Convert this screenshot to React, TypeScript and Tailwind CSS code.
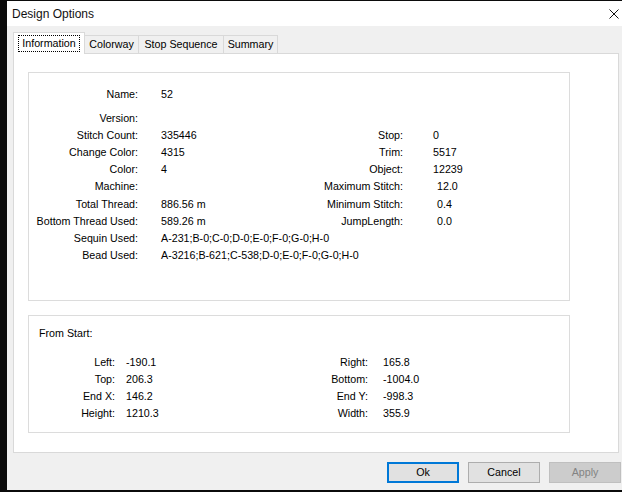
import React from 'react';

const font = { fontFamily: '"Liberation Sans", Arial, sans-serif' };

type Row = { l: string; v: string; rl?: string; rv?: string; shift?: boolean };

const infoRows: Row[] = [
  { l: 'Version:', v: '' },
  { l: 'Stitch Count:', v: '335446', rl: 'Stop:', rv: '0' },
  { l: 'Change Color:', v: '4315', rl: 'Trim:', rv: '5517' },
  { l: 'Color:', v: '4', rl: 'Object:', rv: '12239' },
  { l: 'Machine:', v: '', rl: 'Maximum Stitch:', rv: '12.0', shift: true },
  { l: 'Total Thread:', v: '886.56 m', rl: 'Minimum Stitch:', rv: '0.4', shift: true },
  { l: 'Bottom Thread Used:', v: '589.26 m', rl: 'JumpLength:', rv: '0.0', shift: true },
  { l: 'Sequin Used:', v: 'A-231;B-0;C-0;D-0;E-0;F-0;G-0;H-0' },
  { l: 'Bead Used:', v: 'A-3216;B-621;C-538;D-0;E-0;F-0;G-0;H-0' },
];

const startRows = [
  ['Left:', '-190.1', 'Right:', '165.8'],
  ['Top:', '206.3', 'Bottom:', '-1004.0'],
  ['End X:', '146.2', 'End Y:', '-998.3'],
  ['Height:', '1210.3', 'Width:', '355.9'],
];

function Tab({ label, w }: { label: string; w: string }) {
  return (
    <div
      className={`${w} h-[18px] -ml-px border border-b-0 border-[#d9d9d9] bg-[#f0f0f0] flex items-center justify-center`}
    >
      {label}
    </div>
  );
}

export default function App() {
  return (
    <div
      className="w-[622px] h-[492px] bg-[#0b0b0b] overflow-hidden pl-[7px] pt-[1px] text-[10.7px] text-black"
      style={font}
    >
      <div className="w-[615px] h-[489px] bg-[#f0f0f0] flex flex-col">
        {/* Title bar */}
        <div className="h-[25px] bg-white flex items-center justify-between pl-[5px] pr-[3px]">
          <span className="text-[12px] text-[#111]">Design Options</span>
          <svg width="10" height="10" viewBox="0 0 10 10">
            <path d="M0.5 0.5 L9.5 9.5 M9.5 0.5 L0.5 9.5" stroke="#111" strokeWidth="1" />
          </svg>
        </div>

        {/* Tabs */}
        <div className="pt-[6px] pl-[6px] flex items-end relative z-10">
          <div className="w-[72px] h-[22px] -mb-px bg-white border border-b-0 border-[#d9d9d9] flex items-center justify-center">
            <span className="border border-dotted border-black px-[3px] leading-[15px]">Information</span>
          </div>
          <Tab label="Colorway" w="w-[55px]" />
          <Tab label="Stop Sequence" w="w-[86px]" />
          <Tab label="Summary" w="w-[55px]" />
        </div>

        {/* Tab page */}
        <div className="ml-[6px] w-[606px] h-[400px] bg-white border border-[#d9d9d9] pt-[18px] pl-[14px]">
          {/* Info group */}
          <div className="w-[542px] h-[229px] border border-[#dcdcdc] pt-[13px]">
            <div className="flex h-[17px] items-center">
              <span className="w-[109px] text-right">Name:</span>
              <span className="ml-[23px]">52</span>
            </div>
            <div className="mt-[6px]">
              {infoRows.map((r) => (
                <div key={r.l} className="flex h-[17.2px] items-center whitespace-nowrap">
                  <span className="w-[109px] shrink-0 text-right">{r.l}</span>
                  <span className="ml-[23px] w-[130px] shrink-0">{r.v}</span>
                  <span className="w-[112px] shrink-0 text-right">{r.rl ?? ''}</span>
                  <span className={r.shift ? 'ml-[34px]' : 'ml-[30px]'}>{r.rv ?? ''}</span>
                </div>
              ))}
            </div>
          </div>

          {/* From Start group */}
          <div className="mt-[14px] w-[542px] h-[118px] border border-[#dcdcdc] pt-[9px]">
            <div className="h-[17px] flex items-center pl-[10px]">From Start:</div>
            <div className="mt-[12px]">
              {startRows.map((r) => (
                <div key={r[0]} className="flex h-[17px] items-center whitespace-nowrap">
                  <span className="w-[86px] shrink-0 text-right">{r[0]}</span>
                  <span className="ml-[11px] w-[164px] shrink-0">{r[1]}</span>
                  <span className="w-[78px] shrink-0 text-right">{r[2]}</span>
                  <span className="ml-[15px]">{r[3]}</span>
                </div>
              ))}
            </div>
          </div>
        </div>

        {/* Buttons */}
        <div className="mt-[9px] flex justify-end gap-[9px] pr-[1px]">
          <button className="w-[72px] h-[21px] bg-[#e1e1e1] border-2 border-[#0078d7] flex items-center justify-center">
            Ok
          </button>
          <button className="w-[72px] h-[21px] bg-[#e1e1e1] border border-[#adadad] flex items-center justify-center">
            Cancel
          </button>
          <button className="w-[72px] h-[21px] bg-[#cccccc] border border-[#bfbfbf] text-[#838383] flex items-center justify-center">
            Apply
          </button>
        </div>
      </div>
    </div>
  );
}
